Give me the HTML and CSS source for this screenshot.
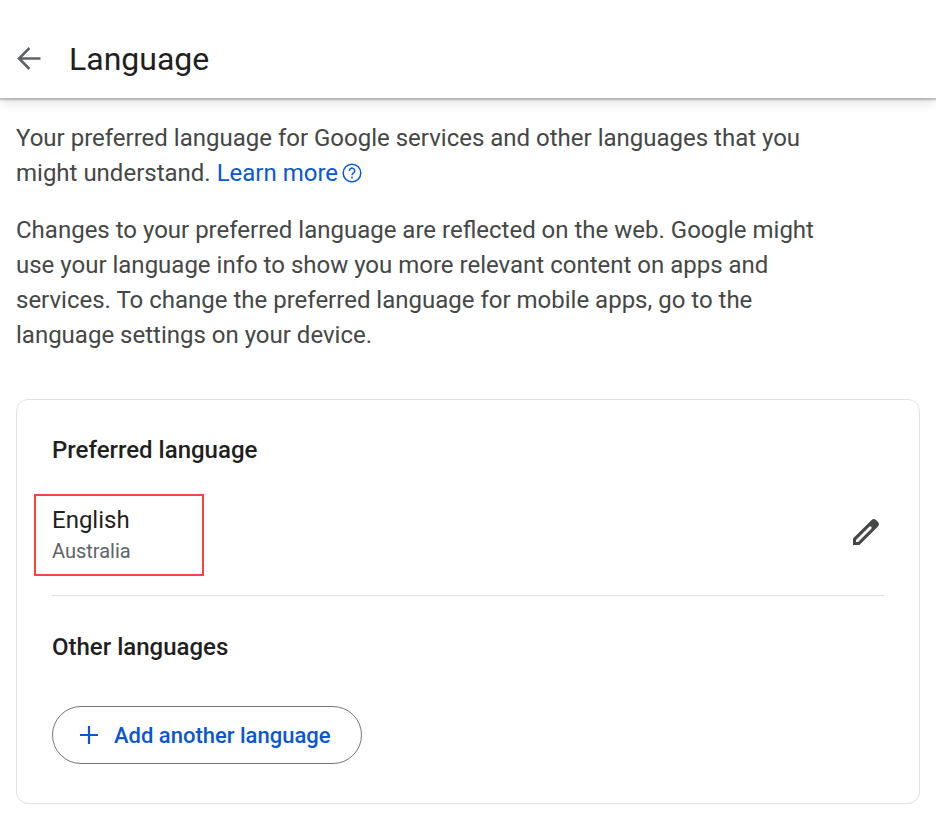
FILE: index.html
```html
<!DOCTYPE html>
<html lang="en">

<head>
  <meta charset="UTF-8">
  <meta name="viewport" content="width=device-width, initial-scale=1.0">
  <title>Language</title>
  <link rel="stylesheet" href="styles.css">
</head>

<body>
  <header class="header">
    <button type="button" class="icon-btn" aria-label="Back">
      <svg class="icon-back" viewBox="0 0 24 24" fill="none" stroke="currentColor" stroke-width="2.6">
        <path d="M23.5 11.5H2M12.5 1L2 11.5L12.5 22"/>
      </svg>
    </button>
    <h1 class="title">Language</h1>
  </header>
  <main class="main">
    <div class="intro">
      <p>
        <span>Your preferred language for Google services and other languages that you</span>
        <span>might understand.</span>
        <a href="#" class="learn-more">Learn more<svg class="icon-help" viewBox="0 0 20 20" fill="none" stroke="currentColor" stroke-width="1.5">
            <circle cx="10" cy="10" r="8.8"/>
            <path d="M7.3 7.9a2.7 2.7 0 1 1 4.3 2.1c-.9.7-1.6 1.1-1.6 2.3"/>
            <path d="M10 13.6v1.9"/>
          </svg></a>
      </p>
      <p>
        Changes to your preferred language are reflected on the web. Google might use your language info to show you more relevant content on apps and services. To change the preferred language for mobile apps, go to the language settings on your device.
      </p>
    </div>
    <section class="card">
      <h2>Preferred language</h2>
      <div class="language">
        <div class="current">
          <div class="name">English</div>
          <div class="region">Australia</div>
        </div>
        <button type="button" class="icon-btn" aria-label="Edit preferred language">
          <svg class="icon-edit" viewBox="0 0 28 28">
            <path fill="currentColor" fill-rule="evenodd" d="M1 20.6L19.6 2c1.4-1.3 3-1.3 4.4 0l2 2c1.3 1.4 1.3 3 0 4.4L7.4 27H1zM4 22v2h2L19.3 10.7c1.2-1.2-.8-3.2-2-2z"/>
          </svg>
        </button>
      </div>
      <h2>Other languages</h2>
      <button type="button" class="add-btn">
        <svg class="icon-add" viewBox="0 0 18 18" fill="none" stroke="currentColor" stroke-width="2.2">
          <path d="M9 0v18M0 9h18"/>
        </svg>
        Add another language
      </button>
    </section>
  </main>
</body>

</html>
```

FILE: styles.css
```css
body {
  margin: 0;
  background: #ffffff;
  color: #1f1f1f;
  font-family: "Google Sans", Roboto, "Liberation Sans", sans-serif;
}

h1,
h2,
p {
  margin: 0;
}

svg {
  display: block;
  overflow: visible;
}

.icon-btn {
  padding: 0;
  border: 0;
  background: none;
  color: #444746;
  cursor: pointer;
}

.header {
  display: flex;
  align-items: center;
  gap: 28px;
  box-sizing: border-box;
  height: 98px;
  padding: 20px 17px 0;
  box-shadow: 0 1px 2px 1px rgba(0, 0, 0, 0.25), 0 4px 12px rgba(0, 0, 0, 0.12);
}

.header .icon-btn {
  color: #5f6368;
}

.icon-back {
  width: 24px;
  height: 24px;
}

.title {
  font-size: 32px;
  font-weight: 400;
  line-height: 40px;
}

.main {
  padding: 23px 16px 16px;
}

.intro {
  max-width: 820px;
  color: #444746;
  font-size: 24px;
  line-height: 35px;
}

.intro p + p {
  margin-top: 22px;
}

.learn-more {
  color: #0b57d0;
  text-decoration: none;
}

.icon-help {
  display: inline-block;
  width: 20px;
  height: 20px;
  margin-left: 4px;
  vertical-align: -2px;
}

.card {
  margin-top: 46px;
  padding: 32px 35px 39px;
  border: 1px solid #e1e3e1;
  border-radius: 12px;
}

.card h2 {
  font-size: 24px;
  font-weight: 500;
  line-height: 36px;
}

.language {
  display: flex;
  align-items: center;
  justify-content: space-between;
  margin: 26px 0 33px;
  padding-bottom: 19px;
  border-bottom: 1px solid #e1e3e1;
}

.language .icon-btn {
  padding: 4px 4px 10px;
}

.current {
  box-sizing: border-box;
  width: 170px;
  margin-left: -18px;
  padding: 7px 16px 9px;
  border: 2px solid #f94343;
}

.name {
  font-size: 24px;
  line-height: 34px;
}

.region {
  color: #5f6368;
  font-size: 20px;
  line-height: 28px;
}

.icon-edit {
  width: 28px;
  height: 28px;
}

.add-btn {
  display: flex;
  align-items: center;
  gap: 16px;
  height: 58px;
  margin-top: 41px;
  padding: 0 30px 0 27px;
  border: 1px solid #747775;
  border-radius: 29px;
  background: none;
  color: #0b57d0;
  font-family: inherit;
  font-size: 22px;
  font-weight: 500;
  cursor: pointer;
}

.icon-add {
  width: 18px;
  height: 18px;
}
```
